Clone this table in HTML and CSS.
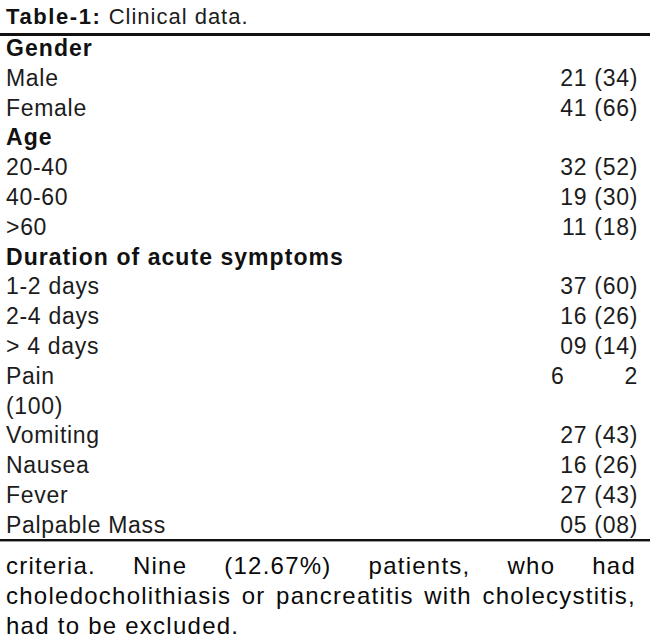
FILE: index.html
```html
<!DOCTYPE html>
<html lang="en">
<head>
<meta charset="utf-8">
<title>Table-1: Clinical data.</title>
<link rel="stylesheet" href="styles.css">
</head>
<body>
<div class="page">
  <div class="caption"><b>Table-1:</b> Clinical data.</div>
  <div class="rule rule-top"></div>
  <div class="rows">
    <div class="row head">Gender</div>
    <div class="row"><span>Male</span><span>21 (34)</span></div>
    <div class="row"><span>Female</span><span>41 (66)</span></div>
    <div class="row head">Age</div>
    <div class="row"><span>20-40</span><span>32 (52)</span></div>
    <div class="row"><span>40-60</span><span>19 (30)</span></div>
    <div class="row"><span>&gt;60</span><span>11 (18)</span></div>
    <div class="row head">Duration of acute symptoms</div>
    <div class="row"><span>1-2 days</span><span>37 (60)</span></div>
    <div class="row"><span>2-4 days</span><span>16 (26)</span></div>
    <div class="row"><span>&gt; 4 days</span><span>09 (14)</span></div>
    <div class="row"><span>Pain</span><span class="split"><span>6</span><span>2</span></span></div>
    <div class="row"><span>(100)</span></div>
    <div class="row"><span>Vomiting</span><span>27 (43)</span></div>
    <div class="row"><span>Nausea</span><span>16 (26)</span></div>
    <div class="row"><span>Fever</span><span>27 (43)</span></div>
    <div class="row last"><span>Palpable Mass</span><span>05 (08)</span></div>
  </div>
  <div class="rule rule-bottom"></div>
  <p class="text">criteria. Nine (12.67%) patients, who had choledocholithiasis or pancreatitis with cholecystitis, had to be excluded.</p>
</div>
</body>
</html>
```
FILE: styles.css
```css
html, body {
  margin: 0;
  padding: 0;
  background: #ffffff;
}

.page {
  width: 650px;
  font-family: "Liberation Sans", Arial, sans-serif;
  color: #1c1c1c;
}

.caption {
  padding: 2px 10px 0 6px;
  height: 31px;
  box-sizing: border-box;
  font-size: 22px;
  line-height: 29px;
  letter-spacing: 1px;
}

.caption b {
  letter-spacing: 1.6px;
  color: #111;
}

.rule {
  width: 100%;
}

.rule-top {
  height: 3px;
  margin-top: 2px;
  background: #111;
}

.rule-bottom {
  height: 2px;
  background: #111;
  border-bottom: 1px solid #9a9a9a;
}

.rows {
  display: flex;
  flex-direction: column;
}

.row {
  display: flex;
  justify-content: space-between;
  align-items: baseline;
  height: 29.8px;
  box-sizing: border-box;
  padding: 0 12px 0 6px;
  font-size: 23px;
  line-height: 24px;
  letter-spacing: 0.7px;
}

.row.last {
  height: 26px;
}

.row.head {
  font-weight: bold;
  letter-spacing: 1.05px;
  color: #111;
}

.split {
  display: flex;
  justify-content: space-between;
  width: 87px;
}

.text {
  margin: 9px 0 0 0;
  padding: 0 14px 0 6px;
  font-size: 24px;
  line-height: 30px;
  letter-spacing: 1.25px;
  text-align: justify;
  color: #0a0a0a;
}
```
